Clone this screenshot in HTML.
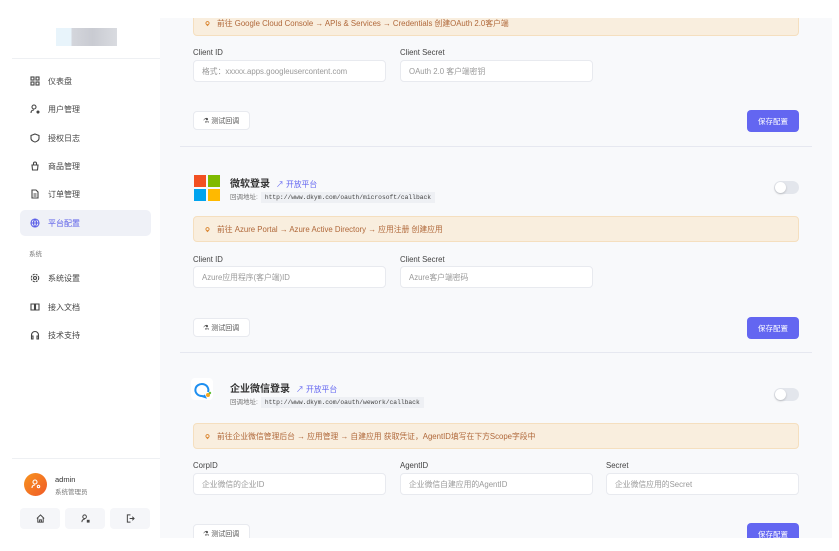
<!DOCTYPE html>
<html><head><meta charset="utf-8"><style>
*{box-sizing:border-box;margin:0;padding:0}
body{width:839px;height:551px;overflow:hidden;background:#fff;font-family:"Liberation Sans","Noto Sans CJK SC",sans-serif;position:relative;color:#333}
.abs{position:absolute}
#side{left:12px;top:18px;width:148px;height:520px;background:#fff}
#main{left:160px;top:18px;width:672px;height:520px;background:#f8f9fb;overflow:hidden}
.nav{position:absolute;left:8px;width:131px;height:26px;border-radius:5px;font-size:8px;color:#444;display:flex;align-items:center;padding-left:10px}
.nav svg{width:10px;height:10px;margin-right:8px}
.nav.act{background:#eff1f7;color:#5b5fe8}
.tip{position:absolute;left:33px;width:606px;height:26px;background:#f9eede;border:1px solid #f5dfbf;border-radius:4px;font-size:7.8px;color:#b0683a;display:flex;align-items:center;padding-left:10px}
.tip svg{width:7px;height:7px;margin-right:6px}
.lbl{position:absolute;font-size:7.8px;color:#444}
.inp{position:absolute;height:22px;background:#fff;border:1px solid #e8eaef;border-radius:4px;font-size:7.8px;color:#999;display:flex;align-items:center;padding-left:8px}
.tb{position:absolute;left:33px;width:57px;height:19px;background:#fff;border:1px solid #e8eaef;border-radius:4px;font-size:7px;color:#555;display:flex;align-items:center;padding-left:9px}
.sv{position:absolute;left:587px;width:52px;height:22px;background:#6366f1;border-radius:4px;color:#fff;font-size:7.5px;display:flex;align-items:center;justify-content:center}
.hr{position:absolute;left:20px;width:632px;height:1px;background:#e6e8f0}
.tg{position:absolute;left:614px;width:25px;height:13px;border-radius:7px;background:#e3e6ec}
.tg:after{content:"";position:absolute;left:1px;top:1px;width:11px;height:11px;border-radius:50%;background:#fff;box-shadow:0 1px 2px rgba(0,0,0,.2)}
.ttl{position:absolute;font-size:10px;font-weight:bold;color:#333}
.lk{font-size:7.8px;color:#6366f1;font-weight:normal;margin-left:6px}
.cb{position:absolute;font-size:6.5px;color:#777}
.cb code{font-family:"Liberation Mono",monospace;font-size:6.3px;background:#eef0f4;color:#444;padding:2px 4px;margin-left:3px}
.ub{position:absolute;top:490px;width:40px;height:21px;background:#f5f6f9;border-radius:4px;display:flex;align-items:center;justify-content:center}
</style></head><body>
<svg width="0" height="0" style="position:absolute"><symbol id="bulb" viewBox="0 0 10 10"><circle cx="5" cy="4.5" r="2.3" fill="none" stroke="#d9822b" stroke-width="1.3"/><path d="M4 8h2" stroke="#d9822b" stroke-width="1.3"/></symbol></svg>
<div id="side" class="abs">
  <div class="abs" style="left:44px;top:10px;width:61px;height:18px;background:linear-gradient(90deg,#e8f4fb 0,#e8f4fb 25%,#d4d6dc 25%,#c9cbd2 60%,#d9dbe0 100%)"></div>
  <div class="abs" style="left:0;top:40px;width:148px;height:1px;background:#eef0f3"></div>
  <div class="nav" style="top:50px"><svg viewBox="0 0 10 10" fill="none" stroke="#444" stroke-width="1.1"><rect x="1" y="1" width="3" height="3"/><rect x="6" y="1" width="3" height="3"/><rect x="1" y="6" width="3" height="3"/><rect x="6" y="6" width="3" height="3"/></svg>仪表盘</div>
  <div class="nav" style="top:78px"><svg viewBox="0 0 10 10" fill="none" stroke="#444" stroke-width="1.1"><circle cx="4" cy="3" r="2"/><path d="M1 9c0-2 1-3 3-3"/><circle cx="8" cy="8" r="1" fill="#444"/></svg>用户管理</div>
  <div class="nav" style="top:107px"><svg viewBox="0 0 10 10" fill="none" stroke="#444" stroke-width="1.1"><path d="M5 1l4 1.5v3C9 8 5 9 5 9S1 8 1 5.5v-3z"/></svg>授权日志</div>
  <div class="nav" style="top:135px"><svg viewBox="0 0 10 10" fill="none" stroke="#444" stroke-width="1.1"><path d="M2 4h6l-.5 5h-5z M3.5 4V2.5a1.5 1.5 0 013 0V4"/></svg>商品管理</div>
  <div class="nav" style="top:163px"><svg viewBox="0 0 10 10" fill="none" stroke="#444" stroke-width="1.1"><path d="M2 1h4l2 2v6H2z M3.5 5h3M3.5 7h3"/></svg>订单管理</div>
  <div class="nav act" style="top:192px"><svg viewBox="0 0 10 10" fill="none" stroke="#5b5fe8" stroke-width="1.1"><circle cx="5" cy="5" r="4"/><path d="M1 5h8M5 1c-2 2.5-2 5.5 0 8M5 1c2 2.5 2 5.5 0 8"/></svg>平台配置</div>
  <div class="abs" style="left:17px;top:230px;font-size:6.5px;color:#777">系统</div>
  <div class="nav" style="top:247px"><svg viewBox="0 0 10 10" fill="none" stroke="#444" stroke-width="1.1"><circle cx="5" cy="5" r="1.5"/><circle cx="5" cy="5" r="3.7" stroke-dasharray="2 1"/></svg>系统设置</div>
  <div class="nav" style="top:276px"><svg viewBox="0 0 10 10" fill="none" stroke="#444" stroke-width="1.1"><path d="M1 2h3.5v6H1z M5.5 2H9v6H5.5z"/></svg>接入文档</div>
  <div class="nav" style="top:304px"><svg viewBox="0 0 10 10" fill="none" stroke="#444" stroke-width="1.1"><path d="M1.5 8V5a3.5 3.5 0 017 0v3M1.5 6h1.5v3h-1.5zM7 6h1.5v3H7z"/></svg>技术支持</div>
  <div class="abs" style="left:0;top:440px;width:148px;height:1px;background:#eef0f3"></div>
  <div class="abs" style="left:12px;top:455px;width:23px;height:23px;border-radius:50%;background:linear-gradient(135deg,#f7931e,#f05a28)"></div>
  <svg class="abs" style="left:19px;top:461px" width="10" height="10" viewBox="0 0 10 10" fill="none" stroke="#fff" stroke-width="1.1"><circle cx="4" cy="3" r="2"/><path d="M1 9c0-2 1-3 3-3"/><circle cx="7.5" cy="7.5" r="1.2"/></svg>
  <div class="abs" style="left:43px;top:457px;font-size:7.5px;color:#333">admin</div>
  <div class="abs" style="left:43px;top:468px;font-size:6.5px;color:#777">系统管理员</div>
  <div class="ub" style="left:8px"><svg width="9" height="9" viewBox="0 0 10 10" fill="none" stroke="#444" stroke-width="1.1"><path d="M1 5l4-4 4 4M2 4v5h6V4M4 9V6.5h2V9"/></svg></div>
  <div class="ub" style="left:53px"><svg width="9" height="9" viewBox="0 0 10 10" fill="none" stroke="#444" stroke-width="1.1"><circle cx="4" cy="3" r="2"/><path d="M1 9c0-2 1-3 3-3"/><rect x="7" y="7" width="2" height="2" fill="#444"/></svg></div>
  <div class="ub" style="left:98px"><svg width="9" height="9" viewBox="0 0 10 10" fill="none" stroke="#444" stroke-width="1.1"><path d="M5 1H1.5v8H5M4 5h5M7 3l2 2-2 2"/></svg></div>
</div>
<div id="main" class="abs">
  <div class="tip" style="top:-8px;height:26px"><svg><use href="#bulb"/></svg>前往 Google Cloud Console → APIs &amp; Services → Credentials 创建OAuth 2.0客户端</div>
  <div class="lbl" style="left:33px;top:30px">Client ID</div>
  <div class="lbl" style="left:240px;top:30px">Client Secret</div>
  <div class="inp" style="left:33px;top:42px;width:193px">格式：xxxxx.apps.googleusercontent.com</div>
  <div class="inp" style="left:240px;top:42px;width:193px">OAuth 2.0 客户端密钥</div>
  <div class="tb" style="top:93px">⚗&nbsp;测试回调</div>
  <div class="sv" style="top:92px">保存配置</div>
  <div class="hr" style="top:128px"></div>

  <div class="abs" style="left:34px;top:157px;width:12px;height:12px;background:#f25022"></div>
  <div class="abs" style="left:48px;top:157px;width:12px;height:12px;background:#7fba00"></div>
  <div class="abs" style="left:34px;top:171px;width:12px;height:12px;background:#00a4ef"></div>
  <div class="abs" style="left:48px;top:171px;width:12px;height:12px;background:#ffb900"></div>
  <div class="ttl" style="left:70px;top:157px">微软登录<span class="lk">↗ 开放平台</span></div>
  <div class="cb" style="left:70px;top:173px">回调地址:<code>http://www.dkym.com/oauth/microsoft/callback</code></div>
  <div class="tg" style="top:163px"></div>
  <div class="tip" style="top:198px"><svg><use href="#bulb"/></svg>前往 Azure Portal → Azure Active Directory → 应用注册 创建应用</div>
  <div class="lbl" style="left:33px;top:237px">Client ID</div>
  <div class="lbl" style="left:240px;top:237px">Client Secret</div>
  <div class="inp" style="left:33px;top:248px;width:193px">Azure应用程序(客户端)ID</div>
  <div class="inp" style="left:240px;top:248px;width:193px">Azure客户端密码</div>
  <div class="tb" style="top:300px">⚗&nbsp;测试回调</div>
  <div class="sv" style="top:299px">保存配置</div>
  <div class="hr" style="top:334px"></div>

  <div class="abs" style="left:31px;top:360px;width:22px;height:22px;background:#fff;border-radius:4px"></div>
  <svg class="abs" style="left:33px;top:362px" width="20" height="20" viewBox="0 0 20 20" fill="none"><path d="M15 12A6.5 6 0 1 0 9 16l3 1-1-2" stroke="#1e8ff0" stroke-width="2"/><circle cx="15" cy="15" r="2" fill="#f7a520"/><circle cx="17" cy="13" r="1.2" fill="#63c13b"/></svg>
  <div class="ttl" style="left:70px;top:362px">企业微信登录<span class="lk">↗ 开放平台</span></div>
  <div class="cb" style="left:70px;top:378px">回调地址:<code>http://www.dkym.com/oauth/wework/callback</code></div>
  <div class="tg" style="top:370px"></div>
  <div class="tip" style="top:405px"><svg><use href="#bulb"/></svg>前往企业微信管理后台 → 应用管理 → 自建应用 获取凭证，AgentID填写在下方Scope字段中</div>
  <div class="lbl" style="left:33px;top:443px">CorpID</div>
  <div class="lbl" style="left:240px;top:443px">AgentID</div>
  <div class="lbl" style="left:446px;top:443px">Secret</div>
  <div class="inp" style="left:33px;top:455px;width:193px">企业微信的企业ID</div>
  <div class="inp" style="left:240px;top:455px;width:193px">企业微信自建应用的AgentID</div>
  <div class="inp" style="left:446px;top:455px;width:193px">企业微信应用的Secret</div>
  <div class="tb" style="top:506px">⚗&nbsp;测试回调</div>
  <div class="sv" style="top:505px">保存配置</div>
</div>
</body></html>
